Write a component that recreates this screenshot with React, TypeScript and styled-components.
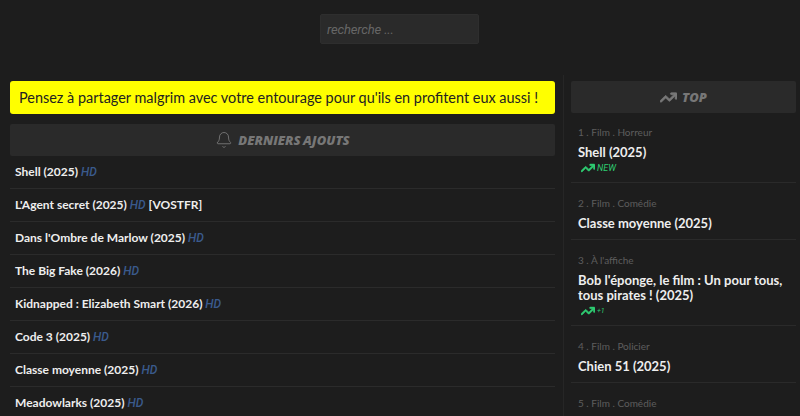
import React from "react";
import styled, { createGlobalStyle } from "styled-components";
import { Bell } from "lucide-react";
import { FaArrowTrendUp } from "react-icons/fa6";

const GlobalStyle = createGlobalStyle`
  html, body {
    margin: 0;
    padding: 0;
    height: 100%;
    overflow: hidden;
    background: #1d1d1d;
    font-family: "Lato", "Open Sans", sans-serif;
  }
`;

const Page = styled.div`
  width: 800px;
  height: 416px;
  overflow: hidden;
  display: flex;
  flex-direction: column;
`;

const SearchBar = styled.div`
  display: flex;
  justify-content: center;
  padding: 14px 0 0 0;
  height: 61px;
  box-sizing: content-box;
  flex: none;
`;

const SearchInput = styled.input`
  width: 159px;
  height: 30px;
  box-sizing: border-box;
  margin-left: -1px;
  padding: 0 6px;
  background: #2a2a2a;
  border: 1px solid #2e2e2e;
  border-radius: 2px;
  color: #ccc;
  font-family: "Roboto", sans-serif;
  font-size: 13px;
  font-style: italic;
  letter-spacing: -0.15px;
  outline: none;

  &::placeholder {
    color: #666;
    opacity: 1;
  }
`;

const Columns = styled.div`
  display: flex;
  flex: 1;
  min-height: 0;
`;

const Main = styled.main`
  width: 545px;
  margin-left: 10px;
  padding-top: 6px;
  flex: none;
`;

const Aside = styled.aside`
  width: 225px;
  margin-left: 8px;
  padding: 6px 4px 0 7px;
  border-left: 1px solid #262626;
  flex: none;
`;

const Notice = styled.div`
  height: 33px;
  background: #ffff00;
  border-radius: 3px;
  padding: 0 9px;
  display: flex;
  align-items: center;
  color: #222;
  font-size: 14.45px;
  white-space: nowrap;
`;

const Heading = styled.h2<{ $top?: number }>`
  margin: ${(p) => p.$top ?? 0}px 0 0;
  height: 32px;
  background: #2a2a2a;
  border-radius: 2px;
  display: flex;
  align-items: center;
  justify-content: center;
  gap: 5px;
  color: #777;
  font-family: "Open Sans", sans-serif;
  font-size: 13px;
  font-style: italic;
  font-weight: 800;
  word-spacing: -1px;
  text-transform: uppercase;
`;

const ThickTrend = styled(FaArrowTrendUp)`
  stroke: currentColor;
  stroke-width: 24px;
`;

const LatestRow = styled.div`
  height: 33px;
  box-sizing: border-box;
  padding: 0 5px;
  line-height: 31px;
  border-bottom: 1px solid #2b2b2b;
  color: #eee;
  font-size: 12px;
  font-weight: 700;
  white-space: pre;
`;

const Quality = styled.span`
  color: #3a5a8c;
  font-family: "Roboto", sans-serif;
  font-style: italic;
  font-weight: 500;
`;

const TopItem = styled.div`
  padding: 13px 7px 0;
  border-bottom: 1px solid #2a2a2a;

  &:first-of-type {
    padding-top: 12px;
  }
`;

const Category = styled.div`
  color: #5e5e5e;
  font-size: 10px;
  line-height: 14px;
`;

const TopTitle = styled.div`
  margin-top: 6px;
  color: #eee;
  font-size: 13px;
  font-weight: 700;
  line-height: 15px;
`;

const Trend = styled.div<{ $small?: boolean }>`
  display: flex;
  align-items: center;
  gap: 2px;
  height: 14px;
  padding: 1px 0 0 3px;
  margin-bottom: 7px;
  color: #2ecc71;
  font-family: "Roboto", sans-serif;
  font-size: ${(p) => (p.$small ? 7 : 9)}px;
  font-style: italic;
`;

const TopGap = styled.div`
  height: 8px;
`;

const latest = [
  { title: "Shell (2025)" },
  { title: "L'Agent secret (2025)", extra: "[VOSTFR]" },
  { title: "Dans l'Ombre de Marlow (2025)" },
  { title: "The Big Fake (2026)" },
  { title: "Kidnapped : Elizabeth Smart (2026)" },
  { title: "Code 3 (2025)" },
  { title: "Classe moyenne (2025)" },
  { title: "Meadowlarks (2025)" },
];

const top = [
  { category: "1 . Film . Horreur", title: "Shell (2025)", trend: "NEW" },
  { category: "2 . Film . Comédie", title: "Classe moyenne (2025)" },
  {
    category: "3 . À l'affiche",
    title: "Bob l'éponge, le film : Un pour tous, tous pirates ! (2025)",
    trend: "+1",
  },
  { category: "4 . Film . Policier", title: "Chien 51 (2025)" },
  { category: "5 . Film . Comédie", title: "" },
];

export default function App() {
  return (
    <Page>
      <GlobalStyle />
      <SearchBar>
        <SearchInput placeholder="recherche ..." />
      </SearchBar>
      <Columns>
        <Main>
          <Notice>Pensez à partager malgrim avec votre entourage pour qu'ils en profitent eux aussi !</Notice>
          <Heading $top={10}>
            <Bell size={18} strokeWidth={1.2} />
            Derniers ajouts
          </Heading>
          {latest.map((item) => (
            <LatestRow key={item.title}>
              {item.title} <Quality>HD</Quality>
              {item.extra ? ` ${item.extra}` : ""}
            </LatestRow>
          ))}
        </Main>
        <Aside>
          <Heading>
            <ThickTrend size={17} />
            Top
          </Heading>
          {top.map((item) => (
            <TopItem key={item.category}>
              <Category>{item.category}</Category>
              <TopTitle>{item.title}</TopTitle>
              {item.trend ? (
                <Trend $small={item.trend === "+1"}>
                  <ThickTrend size={14} />
                  {item.trend}
                </Trend>
              ) : (
                <TopGap />
              )}
            </TopItem>
          ))}
        </Aside>
      </Columns>
    </Page>
  );
}
